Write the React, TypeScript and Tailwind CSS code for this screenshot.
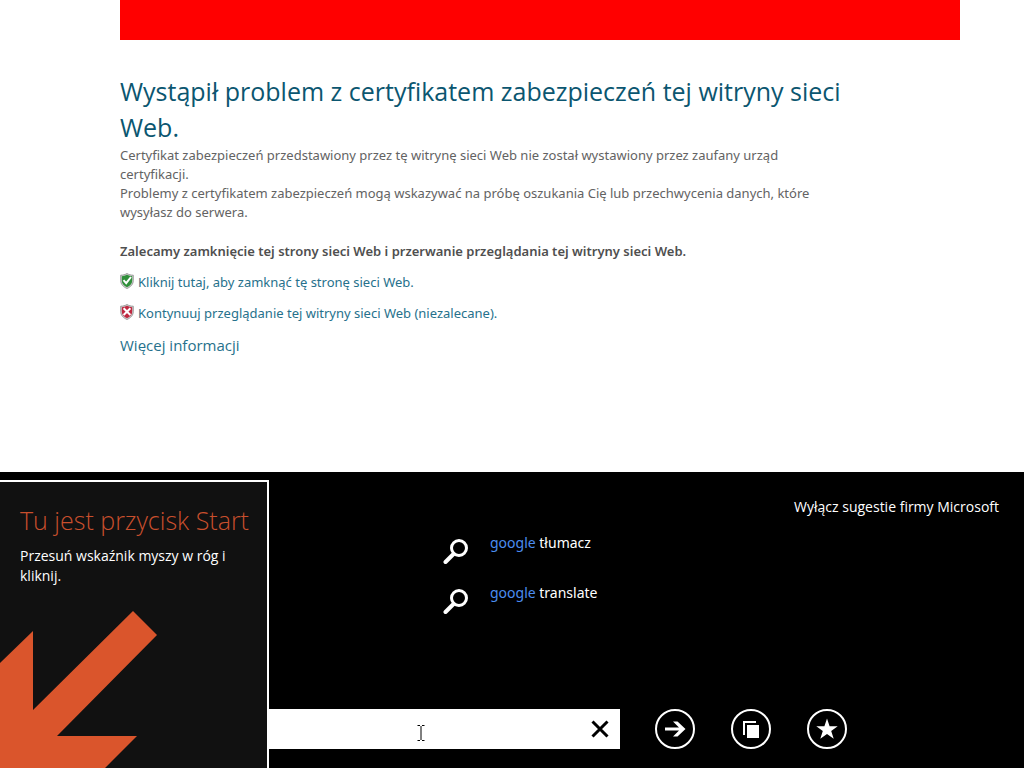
import React, { useState } from 'react';

const SUGGESTIONS = [
  { match: 'google', rest: 'tłumacz' },
  { match: 'google', rest: 'translate' },
];

const SHIELD = 'M7 0.5c2 1.2 4 1.7 6.3 1.7v5.3c0 3.8-2.6 6.4-6.3 8-3.7-1.6-6.3-4.2-6.3-8V2.2C3 2.2 5 1.7 7 0.5z';
const SHIELD_INNER = 'M7 1.800c1.700 0.900 3.300 1.300 5.200 1.400v4.300c0 3.100-2.100 5.300-5.200 6.700-3.100-1.400-5.200-3.600-5.200-6.700v-4.300c1.900-0.100 3.500-0.500 5.200-1.400z';

function Shield({ ok }: { ok: boolean }) {
  return (
    <svg width="14" height="16" viewBox="0 0 14 16" fill="none" aria-hidden="true" className="shrink-0">
      <path d={SHIELD} fill="#d0d0d0" stroke="#8a8a8a" strokeWidth="0.8" />
      <path d={SHIELD_INNER} fill={ok ? '#2f8f3a' : '#bf2840'} />
      {ok ? (
        <path d="M3.500 7.200l2.700 3 4.800-6.200" stroke="#fff" strokeWidth="2" />
      ) : (
        <path d="M3.600 4.200l6.800 6.800M10.400 4.200l-6.800 6.800" stroke="#fff" strokeWidth="2" />
      )}
    </svg>
  );
}

function SearchIcon() {
  return (
    <svg width="26" height="26" viewBox="0 0 26 26" fill="none" stroke="#fff" aria-hidden="true" className="mt-1.5 shrink-0">
      <circle cx="16" cy="9" r="7.500" strokeWidth="3" />
      <path d="M10.500 15L2.500 23" strokeWidth="4" strokeLinecap="round" />
    </svg>
  );
}

function CertificateWarning() {
  return (
    <main className="flex-1 pl-[120px] pr-16 pb-28">
      <div className="h-10 bg-[#ff0000]" />
      <div className="max-w-[724px] pt-[33px] text-[13px] leading-[19px] text-[#636363] font-['Noto_Sans',sans-serif]">
        <h1 className="pb-px text-[25px] leading-9 text-[#0b5670] font-['Open_Sans',sans-serif] font-[370]">
          Wystąpił problem z certyfikatem zabezpieczeń tej witryny sieci Web.
        </h1>
        <p>Certyfikat zabezpieczeń przedstawiony przez tę witrynę sieci Web nie został wystawiony przez zaufany urząd certyfikacji.</p>
        <p>Problemy z certyfikatem zabezpieczeń mogą wskazywać na próbę oszukania Cię lub przechwycenia danych, które wysyłasz do serwera.</p>
        <p className="mt-5 font-semibold text-[#4f4f4f]">Zalecamy zamknięcie tej strony sieci Web i przerwanie przeglądania tej witryny sieci Web.</p>
        <div className="mt-3 flex flex-col items-start gap-3 text-[#26718c]">
          <a href="#close" className="flex gap-1">
            <Shield ok />
            Kliknij tutaj, aby zamknąć tę stronę sieci Web.
          </a>
          <a href="#continue" className="flex gap-1">
            <Shield ok={false} />
            Kontynuuj przeglądanie tej witryny sieci Web (niezalecane).
          </a>
          <a href="#more" className="text-[15px] leading-5 font-['Open_Sans',sans-serif]">Więcej informacji</a>
        </div>
      </div>
    </main>
  );
}

function StartHint() {
  return (
    <aside className="mt-2 flex w-[269px] shrink-0 flex-col justify-between border-t-2 border-r-2 border-white bg-[#111111]">
      <div className="px-5 pt-5">
        <h2 className="whitespace-nowrap text-[25px] leading-9 font-light text-[#c94f2d]">Tu jest przycisk Start</h2>
        <p className="mt-2 text-sm leading-5 text-white">Przesuń wskaźnik myszy w róg i kliknij.</p>
      </div>
      <svg width="158" height="157" viewBox="0 0 158 157" fill="#da552c" aria-hidden="true">
        <path d="M133 0L157 24L57 125H137L105 157H0V52L33 20V99Z" />
      </svg>
    </aside>
  );
}

function AddressBar() {
  const [address, setAddress] = useState('');
  const round = 'flex size-10 items-center justify-center rounded-full border-2 border-white';

  return (
    <div className="flex items-center">
      <div className="relative flex h-10 w-[351px] items-center bg-white">
        <input
          type="text"
          aria-label="Adres"
          value={address}
          onChange={e => setAddress(e.target.value)}
          className="h-full min-w-0 flex-1 px-3 text-black outline-none"
        />
        <button type="button" aria-label="Wyczyść" onClick={() => setAddress('')} className="flex size-10 items-center justify-center">
          <svg width="18" height="18" viewBox="0 0 18 18" stroke="#000" strokeWidth="3" aria-hidden="true">
            <path d="M1.500 1.500L16.500 16.500M16.500 1.500L1.500 16.500" />
          </svg>
        </button>
        {/* text cursor */}
        <svg width="8" height="16" viewBox="0 0 8 16" fill="none" stroke="#000" aria-hidden="true" className="pointer-events-none absolute top-4 left-[148px]">
          <path d="M0.500 0.500h2.500M5 0.500h2.500M4 1v14M0.500 15.500h2.500M5 15.500h2.500" />
        </svg>
      </div>
      <div className="ml-[35px] flex gap-9">
        <button type="button" aria-label="Przejdź" className={round}>
          <svg width="22" height="18" viewBox="0 0 22 18" fill="#fff" aria-hidden="true">
            <path d="M1 7.500H15L9 1.500H13.500L21.500 9L13.500 16.500H9L15 10.500H1Z" />
          </svg>
        </button>
        <button type="button" aria-label="Karty" className={round}>
          <svg width="18" height="18" viewBox="0 0 18 18" fill="#fff" aria-hidden="true">
            <path d="M1 1H14V3H3V15H1Z" />
            <path d="M5 5H17V18H5Z" />
          </svg>
        </button>
        <button type="button" aria-label="Ulubione" className={round}>
          <svg width="22" height="22" viewBox="0 0 22 22" fill="#fff" aria-hidden="true">
            <path d="M11 0.500L13.600 8.200H21.700L15.200 13L17.700 20.800L11 16L4.300 20.800L6.800 13L0.300 8.200H8.400Z" />
          </svg>
        </button>
      </div>
    </div>
  );
}

export default function App() {
  return (
    <div className="flex min-h-screen flex-col bg-white font-['Open_Sans','Noto_Sans',sans-serif]">
      <CertificateWarning />
      <footer className="flex min-h-[296px] bg-black text-sm leading-5 text-white">
        <StartHint />
        <div className="flex flex-1 flex-col justify-between pb-[19px]">
          <div className="pt-[25px]">
            <div className="flex justify-end pr-[25px]">
              <button type="button">Wyłącz sugestie firmy Microsoft</button>
            </div>
            <ul className="ml-[174px] mt-4 font-['Noto_Sans',sans-serif]">
              {SUGGESTIONS.map(s => (
                <li key={s.rest} className="h-[50px]">
                  <button type="button" className="flex items-start gap-[21px] text-left">
                    <SearchIcon />
                    <span>
                      <span className="text-[#4b8df0]">{s.match}</span> {s.rest}
                    </span>
                  </button>
                </li>
              ))}
            </ul>
          </div>
          <AddressBar />
        </div>
      </footer>
    </div>
  );
}
